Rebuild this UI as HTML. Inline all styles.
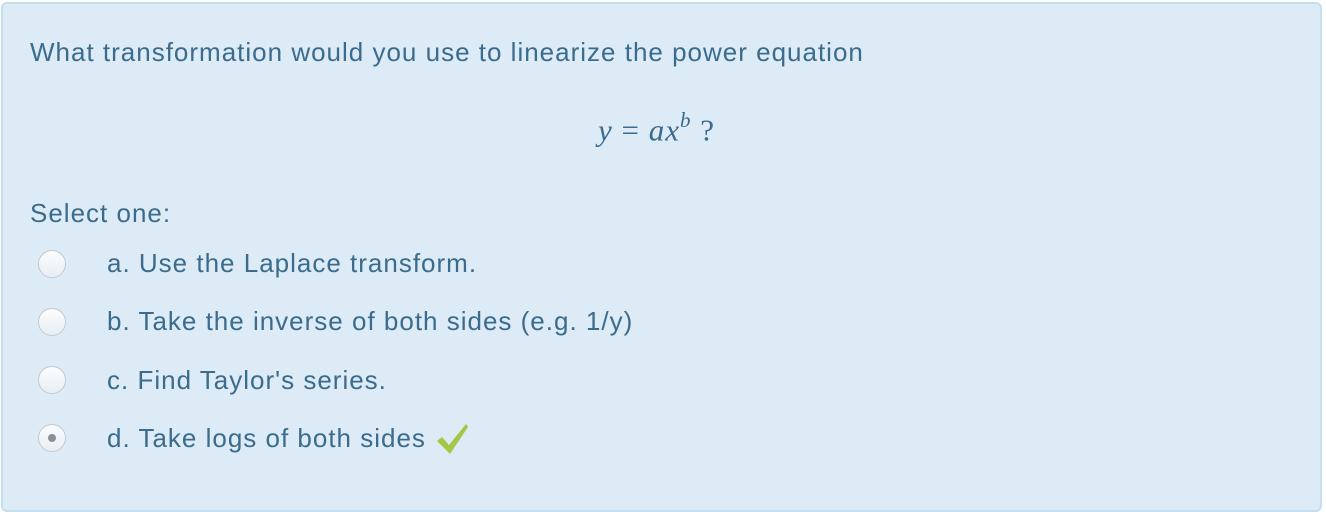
<!DOCTYPE html>
<html><head><style>
html,body{margin:0;padding:0;background:#fff;width:1326px;height:502px;overflow:hidden}
.box{position:absolute;left:1px;top:2px;width:1321px;height:510px;background:#dcebf6;border:2px solid #c3dff0;border-radius:6px;box-sizing:border-box}
.t{position:absolute;font-family:"Liberation Sans",sans-serif;font-size:26px;letter-spacing:1px;color:#3b6b8d;white-space:nowrap;line-height:1}
.r{position:absolute;left:38px;width:28px;height:28px;border-radius:50%;border:1px solid #c3c9cf;background:linear-gradient(#fbfcfd,#e9eef3);box-sizing:border-box}
.dot{position:absolute;left:9px;top:9px;width:8px;height:8px;border-radius:50%;background:#8b9199}
.m{position:absolute;font-family:"Liberation Serif",serif;font-size:31px;letter-spacing:1px;color:#3b6b8d;white-space:nowrap;font-style:italic}
</style></head><body>
<div class="box"></div>
<div class="t" style="left:30px;top:39px">What transformation would you use to linearize the power equation</div>
<div class="m" style="left:598px;top:110px">y <span style="font-style:normal">=</span> ax<sup style="font-size:21px;position:relative;top:-2px">b</sup><span style="font-style:normal"> ?</span></div>
<div class="t" style="left:30px;top:200px">Select one:</div>
<div class="r" style="top:250px"></div>
<div class="t" style="left:107px;top:250px">a. Use the Laplace transform.</div>
<div class="r" style="top:308px"></div>
<div class="t" style="left:107px;top:308px">b. Take the inverse of both sides (e.g. 1/y)</div>
<div class="r" style="top:366px"></div>
<div class="t" style="left:107px;top:367px">c. Find Taylor's series.</div>
<div class="r" style="top:424px"><div class="dot"></div></div>
<div class="t" style="left:107px;top:425px">d. Take logs of both sides</div>
<svg style="position:absolute;left:435px;top:421px" width="36" height="36" viewBox="0 0 36 36"><path d="M2 20 L7 16 L14 24 L31 3 L33 6 L15 33 Z" fill="#a3c847"/></svg>
</body></html>
